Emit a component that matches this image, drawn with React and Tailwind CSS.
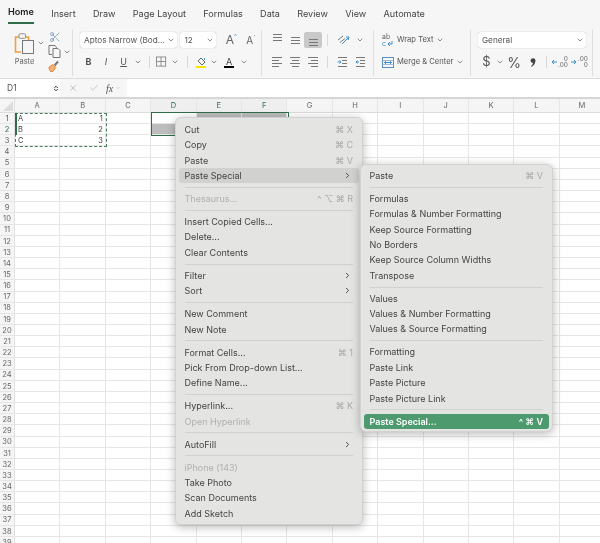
import { ChevronDown, ChevronRight, ChevronUp, Scissors, X, Check } from "lucide-react";

const tabs = ["Home", "Insert", "Draw", "Page Layout", "Formulas", "Data", "Review", "View", "Automate"];
const cols = ["A", "B", "C", "D", "E", "F", "G", "H", "I", "J", "K", "L", "M"];
const rows = Array.from({ length: 39 }, (_, i) => i + 1);

const mainMenu = [
  { label: "Cut", key: "⌘ X" },
  { label: "Copy", key: "⌘ C" },
  { label: "Paste", key: "⌘ V" },
  { label: "Paste Special", arrow: true, active: true },
  "sep",
  { label: "Thesaurus...", key: "^ ⌥ ⌘ R", off: true },
  "sep",
  { label: "Insert Copied Cells..." },
  { label: "Delete..." },
  { label: "Clear Contents" },
  "sep",
  { label: "Filter", arrow: true },
  { label: "Sort", arrow: true },
  "sep",
  { label: "New Comment" },
  { label: "New Note" },
  "sep",
  { label: "Format Cells...", key: "⌘ 1" },
  { label: "Pick From Drop-down List..." },
  { label: "Define Name..." },
  "sep",
  { label: "Hyperlink...", key: "⌘ K" },
  { label: "Open Hyperlink", off: true },
  "sep",
  { label: "AutoFill", arrow: true },
  "sep",
  { label: "iPhone (143)", off: true },
  { label: "Take Photo" },
  { label: "Scan Documents" },
  { label: "Add Sketch" },
];

const subMenu = [
  { label: "Paste", key: "⌘ V" },
  "sep",
  { label: "Formulas" },
  { label: "Formulas & Number Formatting" },
  { label: "Keep Source Formatting" },
  { label: "No Borders" },
  { label: "Keep Source Column Widths" },
  { label: "Transpose" },
  "sep",
  { label: "Values" },
  { label: "Values & Number Formatting" },
  { label: "Values & Source Formatting" },
  "sep",
  { label: "Formatting" },
  { label: "Paste Link" },
  { label: "Paste Picture" },
  { label: "Paste Picture Link" },
  "sep",
  { label: "Paste Special...", key: "^ ⌘ V", primary: true },
];

function Menu({ items, className }) {
  return (
    <div className={"absolute rounded-md bg-[#e4e4e2] border border-[#d2d2d0] shadow-[0_2px_10px_rgba(0,0,0,0.28)] text-[9px] text-[#444] " + className}>
      {items.map((item, i) =>
        item === "sep" ? (
          <div key={i} className="h-[7.67px] flex items-center px-[9px]">
            <div className="h-px w-full bg-[#d0d0ce]" />
          </div>
        ) : (
          <div
            key={i}
            className={
              "h-[15.36px] mx-[3px] pl-[5.5px] pr-[6px] flex items-center justify-between rounded-[3px] " +
              (item.active ? "bg-[#d1d1cf] " : "") +
              (item.primary ? "bg-[#4c9a6e] text-white font-semibold " : "") +
              (item.off ? "text-[#b0b0ae] " : "")
            }
          >
            <span>{item.label}</span>
            {item.key && (
              <span className={item.primary ? "text-white" : "text-[#aaaaa8]"}>{item.key}</span>
            )}
            {item.arrow && <ChevronRight size={9} strokeWidth={2.5} className="text-[#444] mr-[1px]" />}
          </div>
        )
      )}
    </div>
  );
}

function Chev({ className = "" }) {
  return <ChevronDown size={8} strokeWidth={2} className={"text-[#555] shrink-0 " + className} />;
}

function Lines({ widths, className = "" }) {
  return (
    <div className={"flex flex-col gap-[2px] " + className}>
      {widths.map((w, i) => (
        <div key={i} className="h-px bg-[#777]" style={{ width: w }} />
      ))}
    </div>
  );
}

function Slot({ w, children, className = "" }) {
  return (
    <div className={"h-full flex items-center justify-center shrink-0 " + className} style={{ width: w }}>
      {children}
    </div>
  );
}

function VSep() {
  return <div className="w-px h-[12px] bg-[#d8d8d8] shrink-0" />;
}

function Dropdown({ label, className }) {
  return (
    <div className={"h-[16px] bg-white rounded-[3px] shadow-[0_0_1px_rgba(0,0,0,0.35)] flex items-center justify-between pl-[4px] pr-[2px] text-[8.2px] text-[#555] " + className}>
      <span className="whitespace-nowrap">{label}</span>
      <Chev />
    </div>
  );
}

function PasteIcon() {
  return (
    <svg width="21" height="21" viewBox="0 0 21 21" fill="none">
      <path d="M6 4H1.5v15H7" stroke="#eda145" strokeWidth="1.6" />
      <path d="M11 4h3.5v3" stroke="#eda145" strokeWidth="1.6" />
      <rect x="5" y=".8" width="6.5" height="4.5" rx="1" fill="#f6f6f6" stroke="#888" strokeWidth=".9" />
      <rect x="8.5" y="7.5" width="11" height="13" fill="#f6f6f6" stroke="#777" />
    </svg>
  );
}

function CopyIcon() {
  return (
    <svg width="14" height="13" viewBox="0 0 14 13" fill="none" stroke="#777">
      <path d="M1 .5h6l1.5 2v1M1 .5v9h3" />
      <path d="M5 3.5h5l2 2v7H5z" fill="#f6f6f6" />
    </svg>
  );
}

function BrushIcon() {
  return (
    <svg width="12" height="12" viewBox="0 0 12 12" fill="none">
      <path d="M.8 7.5l4-3 3 3-3 4H2.5z" fill="#f4b27a" stroke="#e8842f" />
      <path d="M6.5 5.5L10 1.5" stroke="#777" strokeWidth="2" />
    </svg>
  );
}

function BorderIcon() {
  return (
    <svg width="12" height="12" viewBox="0 0 12 12" fill="none" stroke="#888">
      <rect x=".5" y=".5" width="10" height="10" />
      <path d="M5.5 .5v10M.5 5.5h10" />
    </svg>
  );
}

function FillIcon() {
  return (
    <div className="flex flex-col items-center">
      <svg width="10" height="9" viewBox="0 0 10 9" fill="none">
        <path d="M5 1l4 4-3 3-4-4z" stroke="#666" />
        <path d="M8.5 1v2" stroke="#3aa0d8" />
      </svg>
      <div className="w-[10px] h-[2px] bg-[#f7e600]" />
    </div>
  );
}

function OrientIcon() {
  return (
    <svg width="13" height="12" viewBox="0 0 13 12" fill="none">
      <path d="M1 6l5-4M3 8.5l5-4" stroke="#777" />
      <path d="M5 10l6-6" stroke="#3a8fd0" />
      <path d="M9 3l3 0-1 3" stroke="#3a8fd0" />
    </svg>
  );
}

function IndentIcon({ flip }) {
  return (
    <svg width="11" height="10" viewBox="0 0 11 10" fill="none">
      <path d="M1 .5h9M1 9.5h9M5 3.5h5M5 6.5h5" stroke="#777" />
      <path d={flip ? "M.5 5h3M2.5 3.5L4 5 2.5 6.5" : "M4 5H1M2.5 3.5L1 5l1.5 1.5"} stroke="#3a8fd0" />
    </svg>
  );
}

function WrapIcon() {
  return (
    <div className="flex flex-col w-[12px] text-[7px] leading-[7px] text-[#666]">
      <span>ab</span>
      <div className="flex items-center gap-[1px]">
        <span className="text-[#3a8fd0]">c</span>
        <svg width="6" height="6" viewBox="0 0 6 6" fill="none" stroke="#3a8fd0">
          <path d="M5 0v3H1M3 1L1 3l2 2" />
        </svg>
      </div>
    </div>
  );
}

function MergeIcon() {
  return (
    <svg width="12" height="11" viewBox="0 0 12 11" fill="none">
      <rect x=".5" y=".5" width="11" height="10" stroke="#5a8fc0" />
      <path d="M.5 3.5h11M.5 7.5h11" stroke="#9dbbd8" />
      <path d="M2.5 5.5h7M4 4.2L2.5 5.5 4 6.8M8 4.2l1.5 1.3L8 6.8" stroke="#3a8fd0" />
    </svg>
  );
}

function CommaIcon() {
  return (
    <svg width="6" height="9" viewBox="0 0 6 9" fill="#444">
      <circle cx="3" cy="2.6" r="2.4" />
      <path d="M5.4 2.6C5.4 5.5 4 7.6 1.5 8.8L1 8.2C2.3 7 3 6 3 4.6z" />
    </svg>
  );
}

function DecimalIcon({ more }) {
  return (
    <div className="flex items-center gap-[1px]">
      <svg width="6" height="6" viewBox="0 0 6 6" fill="none" stroke="#3a8fd0">
        <path d={more ? "M6 3H1M3 1L1 3l2 2" : "M0 3h5M3 1l2 2-2 2"} />
      </svg>
      <div className="flex flex-col items-end text-[6.5px] leading-[6.5px] text-[#666]">
        <span>{more ? "0" : ".00"}</span>
        <span>{more ? ".00" : "0"}</span>
      </div>
    </div>
  );
}

function Ribbon() {
  return (
    <div className="h-[78px] bg-[#f6f6f6] text-[#444]">
      <div className="h-[24px] pl-[8px] flex gap-[17.3px] text-[9.1px] text-[#444]">
        {tabs.map((t) => (
          <div
            key={t}
            className={"h-full flex items-end pb-[3px] whitespace-nowrap " + (t === "Home" ? "font-semibold text-[#222] border-b-2 border-[#2e6f4a] pb-[1px]" : "")}
          >
            {t}
          </div>
        ))}
      </div>
      <div className="h-[46px] mt-[6px] flex">
        {/* clipboard */}
        <div className="w-[73px] shrink-0 border-r border-[#dedede] flex pl-[11px]">
          <div className="w-[27px] flex flex-col items-center pt-[3px]">
            <PasteIcon />
            <div className="text-[7.5px] text-[#666] mt-[2px]">Paste</div>
          </div>
          <Chev className="mt-[9px] -ml-[1px]" />
          <div className="flex flex-col items-start ml-[3px] gap-[2px] pt-[1px]">
            <Scissors size={12} className="text-[#5a86b0] ml-[1px]" strokeWidth={1.3} />
            <div className="flex items-center gap-[1px]">
              <CopyIcon />
              <Chev />
            </div>
            <BrushIcon />
          </div>
        </div>
        {/* font */}
        <div className="w-[189px] shrink-0 border-r border-[#dedede] pl-[7px] pt-[2px]">
          <div className="flex items-center h-[16px]">
            <Dropdown label="Aptos Narrow (Bod..." className="w-[98px]" />
            <Dropdown label="12" className="w-[36px] ml-[3px]" />
            <div className="ml-[5px] w-[20px] text-[12px] text-[#666] flex justify-center">A<span className="text-[6px] text-[#3a8fd0]">^</span></div>
            <div className="w-[20px] text-[10px] text-[#666] flex justify-center">A<span className="text-[6px] text-[#3a8fd0]">ˇ</span></div>
          </div>
          <div className="flex items-center h-[16px] mt-[6px]">
            <Slot w={17} className="text-[9px] font-bold text-[#555]">B</Slot>
            <Slot w={18} className="text-[9px] italic text-[#555]">I</Slot>
            <Slot w={17} className="text-[9px] underline text-[#555]">U</Slot>
            <Slot w={11}><Chev /></Slot>
            <Slot w={13}><VSep /></Slot>
            <Slot w={11}><BorderIcon /></Slot>
            <Slot w={15}><Chev /></Slot>
            <Slot w={10}><VSep /></Slot>
            <Slot w={18}><FillIcon /></Slot>
            <Slot w={8}><Chev /></Slot>
            <Slot w={22}>
              <div className="flex flex-col items-center text-[9px] leading-[9px] text-[#444]">
                A
                <div className="w-[10px] h-[2px] bg-black" />
              </div>
            </Slot>
            <Slot w={8}><Chev /></Slot>
          </div>
        </div>
        {/* alignment */}
        <div className="w-[112px] shrink-0 border-r border-[#dedede] pl-[6px] pt-[2px]">
          <div className="flex items-center h-[16px]">
            <Slot w={18}><Lines widths={[9, 9, 9]} className="mb-[5px]" /></Slot>
            <Slot w={18}><Lines widths={[9, 9, 9]} /></Slot>
            <Slot w={18} className="bg-[#c9c9c9] rounded-[2px]"><Lines widths={[9, 9, 9]} className="mt-[5px]" /></Slot>
            <Slot w={10}><VSep /></Slot>
            <Slot w={23}><OrientIcon /></Slot>
            <Slot w={10}><Chev /></Slot>
          </div>
          <div className="flex items-center h-[16px] mt-[6px]">
            <Slot w={18}><Lines widths={[10, 7, 10, 7]} className="items-start" /></Slot>
            <Slot w={18}><Lines widths={[10, 7, 10, 7]} className="items-center" /></Slot>
            <Slot w={18}><Lines widths={[10, 7, 10, 7]} className="items-end" /></Slot>
            <Slot w={10}><VSep /></Slot>
            <Slot w={20}><IndentIcon flip /></Slot>
            <Slot w={17}><IndentIcon /></Slot>
          </div>
        </div>
        {/* wrap and merge */}
        <div className="w-[97px] shrink-0 border-r border-[#dedede] pl-[8px] pt-[2px] text-[7.6px] text-[#555]">
          <div className="flex items-center h-[16px] gap-[3px]">
            <WrapIcon />
            <span className="whitespace-nowrap">Wrap Text</span>
            <Chev />
          </div>
          <div className="flex items-center h-[16px] mt-[6px] gap-[3px]">
            <MergeIcon />
            <span className="whitespace-nowrap">Merge &amp; Center</span>
            <Chev />
          </div>
        </div>
        {/* number */}
        <div className="w-[122px] shrink-0 border-r border-[#dedede] pl-[7px] pr-[7px] pt-[2px]">
          <Dropdown label="General" className="w-[108px]" />
          <div className="flex items-center h-[16px] mt-[6px] text-[#555]">
            <Slot w={17} className="text-[13px]">$</Slot>
            <Slot w={10}><Chev /></Slot>
            <Slot w={18} className="text-[14px]">%</Slot>
            <Slot w={20}><CommaIcon /></Slot>
            <Slot w={6}><VSep /></Slot>
            <Slot w={21}><DecimalIcon more /></Slot>
            <Slot w={19}><DecimalIcon /></Slot>
          </div>
        </div>
      </div>
    </div>
  );
}

function FormulaBar() {
  return (
    <div className="h-[21px] border-t border-[#dcdcdc] border-b-2 border-b-[#d6d6d6] bg-[#f6f6f6] flex items-stretch text-[#555]">
      <div className="w-[60px] bg-white flex items-center justify-between pl-[7px] pr-[1px] text-[8.5px]">
        D1
        <div className="flex flex-col -space-y-[3px]">
          <ChevronUp size={6} strokeWidth={4} className="text-[#333]" />
          <ChevronDown size={6} strokeWidth={4} className="text-[#333]" />
        </div>
      </div>
      <div className="w-[67px] flex items-center pl-[8px]">
        <X size={10} className="text-[#bbb]" />
        <Check size={10} className="text-[#bbb] ml-[11px]" />
        <span className="ml-[7px] text-[10px] italic text-[#555]" style={{ fontFamily: "'Liberation Serif', serif" }}>fx</span>
        <ChevronDown size={6} className="text-[#bbb] ml-[2px]" />
      </div>
      <div className="flex-1 bg-white" />
    </div>
  );
}

function Sheet() {
  const hot = ["D", "E", "F"];
  return (
    <div className="relative text-[7.5px] text-[#666]">
      <div className="h-[14px] bg-[#f5f5f5] flex border-b border-[#dcdcdc]">
        <div className="w-[15px] shrink-0 border-r border-[#e2e2e2] relative overflow-hidden">
          <div className="absolute right-[1px] bottom-[1px] w-0 h-0 border-l-[10px] border-l-transparent border-b-[10px] border-b-[#dcdcdc]" />
        </div>
        {cols.map((c) => (
          <div
            key={c}
            className={
              "w-[45.4px] shrink-0 flex items-center justify-center pt-[1px] border-r border-[#e6e6e6] " +
              (hot.includes(c) ? "bg-[#efefef] text-[#2e6f4a]" : "")
            }
          >
            {c}
          </div>
        ))}
      </div>
      {rows.map((r) => (
        <div key={r} className="h-[11.16px] flex border-b border-[#e6e6e6] bg-white">
          <div
            className={
              "w-[15px] shrink-0 bg-[#f5f5f5] border-r border-[#e2e2e2] flex items-center justify-center pt-[1px] leading-none " +
              (r < 3 ? "text-[#2e6f4a]" : "")
            }
          >
            {r}
          </div>
          {cols.map((c) => {
            const filled = (r === 1 && (c === "E" || c === "F")) || (r === 2 && hot.includes(c));
            let text = "";
            if (r < 4 && c === "A") text = ["A", "B", "C"][r - 1];
            if (r < 4 && c === "B") text = String(r);
            return (
              <div
                key={c}
                className={
                  "w-[45.4px] shrink-0 border-r border-[#e6e6e6] flex items-center pt-[1px] pl-[3px] pr-[2px] leading-none text-[#444] " +
                  (c === "B" ? "justify-end " : "") +
                  (filled ? "bg-[#bdbdbd]" : "")
                }
              >
                {text}
              </div>
            );
          })}
        </div>
      ))}
      {/* copied range */}
      <div className="absolute left-[15px] top-[14px] w-[92px] h-[34px] border-[1.5px] border-dashed border-[#4f7d60]" />
      <div className="absolute left-[15px] top-[14px] w-[1.5px] h-[22px] bg-[#2e6f4a]" />
      {/* selection */}
      <div className="absolute left-[151px] top-[13px] w-[138px] h-[24px] border border-[#2e6f4a]" />
    </div>
  );
}

export default function App() {
  return (
    <div
      className="relative w-[600px] h-[543px] overflow-hidden bg-white blur-[0.35px]"
      style={{ fontFamily: "Inter, 'Liberation Sans', sans-serif" }}
    >
      <Ribbon />
      <FormulaBar />
      <Sheet />
      <Menu items={mainMenu} className="left-[175px] top-[117px] w-[188px] pt-[4px] pb-[3px]" />
      <Menu items={subMenu} className="left-[360px] top-[164px] w-[193px] pt-[3px] pb-[2px]" />
    </div>
  );
}
